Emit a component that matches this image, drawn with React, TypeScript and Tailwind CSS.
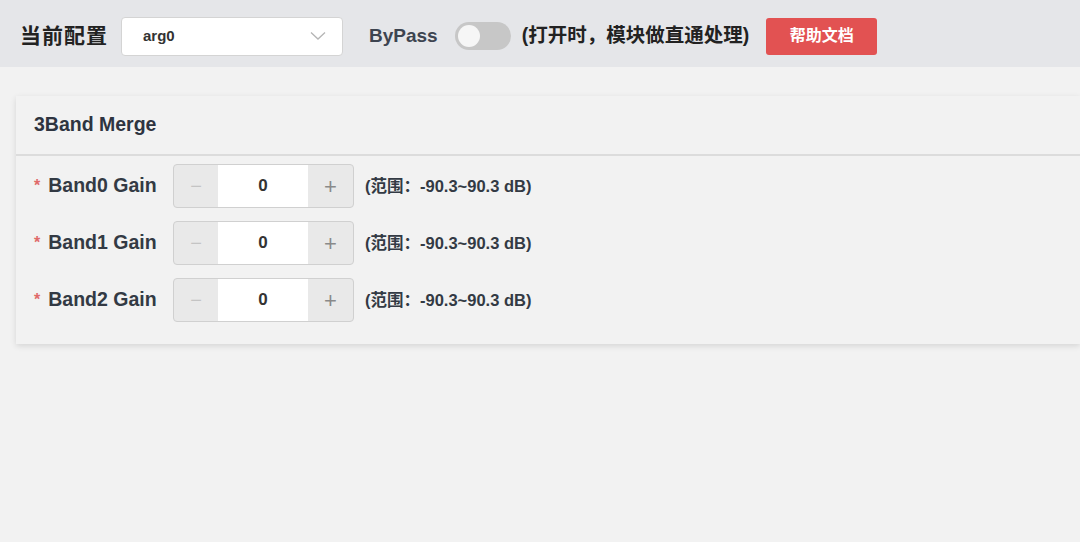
import type { FC } from "react";

const font = { fontFamily: '"Liberation Sans", "Noto Sans CJK SC", sans-serif' };

const bands = ["Band0 Gain", "Band1 Gain", "Band2 Gain"];

const Stepper: FC = () => (
  <div className="flex h-[44px] w-[181px] rounded-[4px] border border-[#d0d0d0] bg-[#e9e9e9] overflow-hidden">
    <button className="w-[44px] flex items-center justify-center text-[#c4c4c4] text-[20px] font-light">−</button>
    <div className="flex-1 bg-white flex items-center justify-center text-[17px] font-bold text-[#333]">0</div>
    <button className="w-[45px] flex items-center justify-center text-[#8a8a8a] text-[22px] font-light">+</button>
  </div>
);

const App: FC = () => {
  return (
    <div className="w-[1080px] h-[542px] bg-[#f2f2f2] overflow-hidden" style={font}>
      <div className="h-[67px] bg-[#e5e6e9] flex items-center pl-[20px] pt-[5px]">
        <span className="text-[21px] font-bold text-[#222] tracking-[1px]">当前配置</span>
        <div className="ml-[13px] w-[222px] h-[39px] bg-white border border-[#d4d4d4] rounded-[4px] flex items-center justify-between pl-[21px] pr-[16px]">
          <span className="text-[15px] font-bold text-[#333]">arg0</span>
          <svg width="16" height="10" viewBox="0 0 16 10" fill="none" stroke="#b5b5b5" strokeWidth="1.3">
            <path d="M1 1.5 L8 8 L15 1.5" />
          </svg>
        </div>
        <span className="ml-[26px] text-[19px] font-bold text-[#3d4450]">ByPass</span>
        <div className="ml-[17px] w-[56px] h-[28px] rounded-full bg-[#c7c7c7] p-[3px] flex items-center">
          <div className="w-[22px] h-[22px] rounded-full bg-[#f6f6f6]" />
        </div>
        <span className="ml-[11px] text-[19.5px] font-bold text-[#222]">(打开时，模块做直通处理)</span>
        <button className="ml-[17px] w-[111px] h-[37px] rounded-[3px] bg-[#e25252] text-white text-[16px] font-bold">帮助文档</button>
      </div>

      <div className="mt-[29px] ml-[16px] bg-[#f2f2f2] shadow-[0_2px_6px_rgba(0,0,0,0.12)] pb-[22px]">
        <div className="h-[60px] flex items-center pl-[18px] border-b-2 border-[#dcdcdc]">
          <span className="text-[19.5px] font-bold text-[#2e3440]">3Band Merge</span>
        </div>
        <div className="flex flex-col gap-[13px] pt-[8px]">
          {bands.map((b) => (
            <div key={b} className="flex items-center">
              <div className="w-[157px] pl-[18px] flex items-center">
                <span className="text-[#e06a6a] text-[16px] mr-[8px] font-bold">*</span>
                <span className="text-[19.5px] font-bold text-[#333a44]">{b}</span>
              </div>
              <Stepper />
              <span className="ml-[11px] text-[16.5px] font-bold text-[#333a44]">(范围：-90.3~90.3 dB)</span>
            </div>
          ))}
        </div>
      </div>
    </div>
  );
};

export default App;
